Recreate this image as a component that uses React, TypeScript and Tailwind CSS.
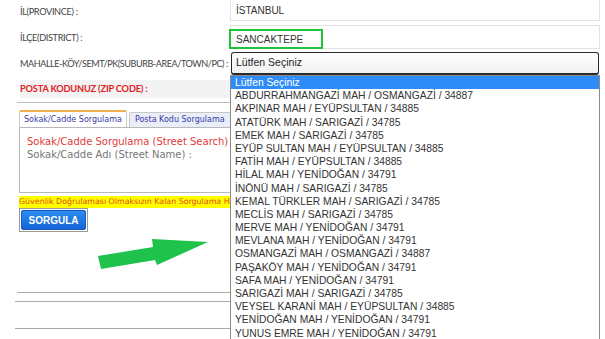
import React from "react";

const items = [
  "ABDURRAHMANGAZİ MAH / OSMANGAZİ / 34887",
  "AKPINAR MAH / EYÜPSULTAN / 34885",
  "ATATÜRK MAH / SARIGAZİ / 34785",
  "EMEK MAH / SARIGAZİ / 34785",
  "EYÜP SULTAN MAH / EYÜPSULTAN / 34885",
  "FATİH MAH / EYÜPSULTAN / 34885",
  "HİLAL MAH / YENİDOĞAN / 34791",
  "İNÖNÜ MAH / SARIGAZİ / 34785",
  "KEMAL TÜRKLER MAH / SARIGAZİ / 34785",
  "MECLİS MAH / SARIGAZİ / 34785",
  "MERVE MAH / YENİDOĞAN / 34791",
  "MEVLANA MAH / YENİDOĞAN / 34791",
  "OSMANGAZİ MAH / OSMANGAZİ / 34887",
  "PAŞAKÖY MAH / YENİDOĞAN / 34791",
  "SAFA MAH / YENİDOĞAN / 34791",
  "SARIGAZİ MAH / SARIGAZİ / 34785",
  "VEYSEL KARANİ MAH / EYÜPSULTAN / 34885",
  "YENİDOĞAN MAH / YENİDOĞAN / 34791",
  "YUNUS EMRE MAH / YENİDOĞAN / 34791",
];

const labelCls =
  "w-[230px] shrink-0 pl-[20px] flex items-center text-[9.2px] tracking-[-0.35px] text-[#444] font-['Lato',sans-serif] whitespace-nowrap";

export default function App() {
  return (
    <div className="relative w-[605px] h-[339px] overflow-hidden bg-white font-['Liberation_Sans',Arial,sans-serif]">
      <div className="flex flex-col">
        {/* Row 1 */}
        <div className="flex h-[25px]">
          <div className={labelCls + " h-[24px]"}>İL(PROVINCE) :</div>
          <div className="w-[370px] h-[22px] -mt-px border border-[#e3e3e3] flex items-center pl-[5px] text-[10px] text-[#333]">
            İSTANBUL
          </div>
        </div>
        {/* Row 2 */}
        <div className="flex h-[27px]">
          <div className={labelCls + " h-[26px]"}>İLÇE(DISTRICT) :</div>
          <div className="relative w-[370px] h-[24px] border border-[#e3e3e3]">
            <div className="absolute left-[-2px] top-[3px] w-[94px] h-[20px] border-2 border-[#22c33c] flex items-center pl-[5px] text-[10px] text-[#333]">
              SANCAKTEPE
            </div>
          </div>
        </div>
        {/* Row 3 */}
        <div className="flex h-[28px]">
          <div className="w-[230px] shrink-0 pl-[20px] h-[24px] flex items-center text-[9.1px] tracking-[-0.45px] text-[#444] font-['Lato',sans-serif] whitespace-nowrap">
            MAHALLE-KÖY/SEMT/PK(SUBURB-AREA/TOWN/PC) :
          </div>
          <div className="ml-px w-[368px] h-[23px] border border-[#2a2a2a] border-b-2 rounded-[3px] bg-gradient-to-b from-white to-[#f1f1f1] flex items-center pl-[4px] text-[10.5px] text-[#222]">
            Lütfen Seçiniz
          </div>
        </div>
        {/* Row 4 */}
        <div className="ml-[20px] w-[230px] h-[18px] bg-[#f3f3f3] flex items-center text-[9.2px] tracking-[-0.15px] font-bold text-[#e0201c] font-['Lato',sans-serif]">
          POSTA KODUNUZ (ZIP CODE) :
        </div>
        <div className="mt-[4px] ml-[17px] w-[230px] h-px bg-[#bdbdbd]" />

        {/* Tabs */}
        <div className="mt-[7px] ml-[19px] flex items-end gap-[2px] font-['DejaVu_Sans',Verdana,sans-serif] text-[8px]">
          <div className="h-[17px] px-[4px] border border-[#c8c8c8] border-t-2 border-t-[#f0b050] border-b-0 bg-white text-[#3a3aa8] flex items-center rounded-t-[2px]">
            Sokak/Cadde Sorgulama
          </div>
          <div className="h-[15px] px-[5px] border border-[#c8c8c8] border-b-0 bg-[#e9eef9] text-[#3a3aa8] flex items-center whitespace-nowrap rounded-t-[2px]">
            Posta Kodu Sorgulama
          </div>
        </div>
        <div className="ml-[19px] w-[230px] h-[66px] border border-[#b8b8b8] pt-[7px] pl-[7px] font-['DejaVu_Sans',Verdana,sans-serif] text-[10px] leading-[13px] whitespace-nowrap">
          <div className="text-[#e23a3a]">Sokak/Cadde Sorgulama (Street Search)</div>
          <div className="text-[#777]">Sokak/Cadde Adı (Street Name) :</div>
        </div>

        {/* Warning */}
        <div className="mt-[3px] ml-[19px] w-[230px] h-[12px] bg-[#ffff00] text-[#e24a10] font-['DejaVu_Sans',Verdana,sans-serif] text-[7.9px] leading-[12px] whitespace-nowrap">
          Güvenlik Doğrulaması Olmaksızın Kalan Sorgulama Hakkınız
        </div>

        {/* Button */}
        <div className="ml-[19px] w-[69px] h-[24px] border border-[#9a9a9a] p-px">
          <div className="w-full h-full rounded-[2px] border border-[#1559c0] bg-gradient-to-b from-[#2e8cf0] to-[#1565d8] text-white font-bold text-[10px] flex items-center justify-center">
            SORGULA
          </div>
        </div>

        {/* Bottom lines */}
        <div className="mt-[60px] ml-[17px] w-[230px] h-px bg-[#aaaaaa]" />
        <div className="mt-[8px] ml-[15px] w-[230px] h-px bg-[#aaaaaa]" />
        <div className="mt-[26px] ml-[15px] w-[230px] h-px bg-[#aaaaaa]" />
      </div>

      {/* Green arrow annotation */}
      <svg className="absolute left-0 top-0" width="605" height="339" viewBox="0 0 605 339">
        <polygon
          points="98,256 153,247 152,239 208,242 157,265 155,260 101,269"
          fill="#1fc24a"
        />
      </svg>

      {/* Open dropdown list */}
      <div className="absolute left-[230px] top-[75px] w-[370px] h-[270px] bg-white border border-[#8a8a8a] text-[10.3px] text-[#333]">
        <div className="h-[13.2px] leading-[13.2px] bg-[#2f8cf6] text-white pl-[4px]">Lütfen Seçiniz</div>
        {items.map((t) => (
          <div key={t} className="h-[13.2px] leading-[13.2px] pl-[4px] whitespace-nowrap">
            {t}
          </div>
        ))}
      </div>
    </div>
  );
}
